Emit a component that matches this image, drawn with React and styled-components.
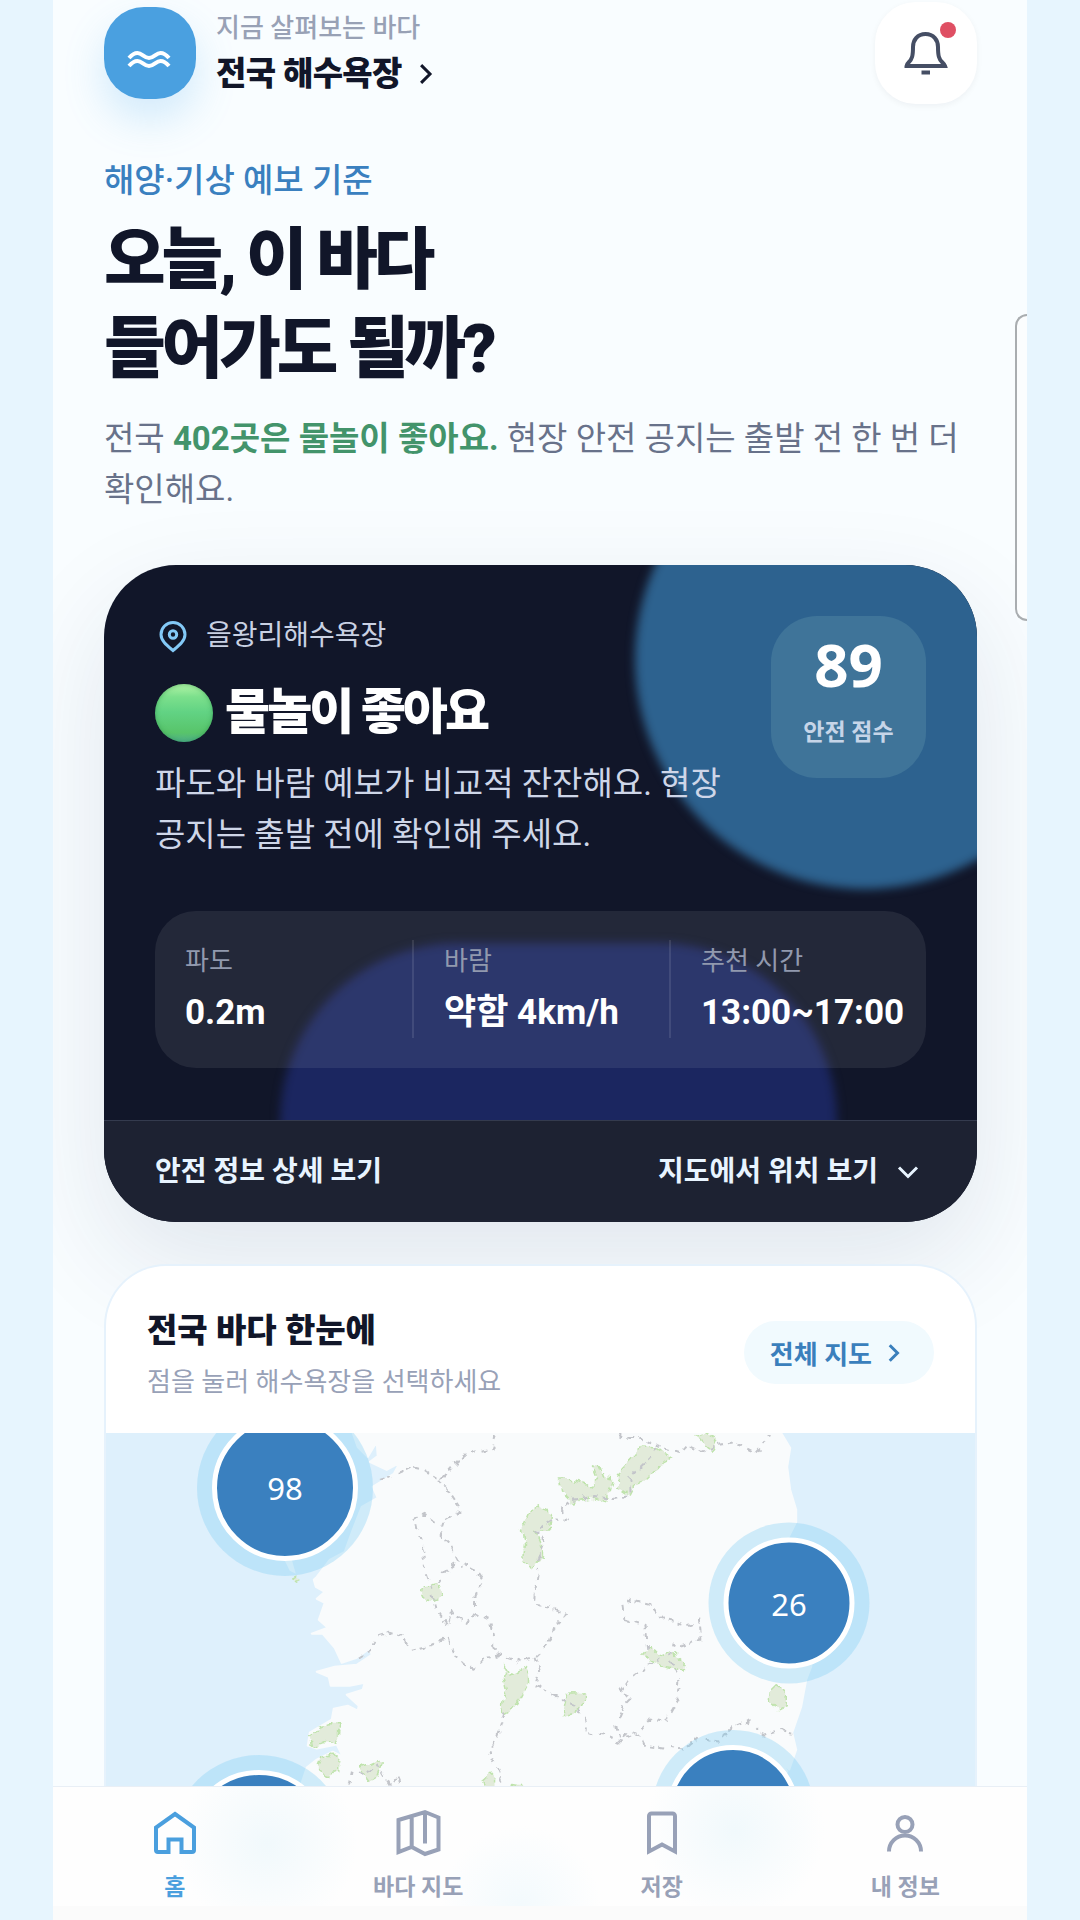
import React, { useState } from 'react';
import styled, { createGlobalStyle } from 'styled-components';

const GUTTER = '53px';

const GlobalStyle = createGlobalStyle`
    *, *::before, *::after {
        box-sizing: border-box;
    }

    body {
        margin: 0;
        background: #e7f5fe;
        color: #111629;
        font-family: Roboto, 'Noto Sans CJK KR', sans-serif;
        word-break: keep-all;
    }

    h1, h2, p, dl, dt, dd {
        margin: 0;
    }

    button {
        padding: 0;
        border: 0;
        background: none;
        color: inherit;
        font: inherit;
        cursor: pointer;
    }
`;

const Frame = styled.div`
    position: relative;
    display: flex;
    flex-direction: column;
    height: 100vh;
    margin: 0 ${GUTTER};
    padding: 2px 50px 0 51px;
    overflow: hidden;
    background: #f9fdff;
`;

const Header = styled.header`
    display: flex;
    align-items: center;
    gap: 20px;
`;

const Logo = styled.div`
    display: grid;
    place-items: center;
    width: 92px;
    height: 92px;
    border-radius: 40px;
    background: #4aa0e0;
    color: #fff;
    box-shadow: 0 20px 40px rgba(74, 170, 235, 0.22);
`;

const Place = styled.div`
    flex: 1;
    padding-top: 2px;
`;

const PlaceHint = styled.p`
    color: #98a1b5;
    font-size: 26px;
    font-weight: 500;
    line-height: 40px;
`;

const PlaceButton = styled.button`
    display: flex;
    align-items: center;
    gap: 8px;
    font-size: 33px;
    font-weight: 900;
    line-height: 52px;
    letter-spacing: -0.02em;
`;

const BellButton = styled.button`
    position: relative;
    display: grid;
    place-items: center;
    width: 102px;
    height: 102px;
    border-radius: 41px;
    background: #fff;
    color: #454e64;
    box-shadow: 0 2px 6px rgba(17, 22, 41, 0.05);
`;

const BellDot = styled.span`
    position: absolute;
    top: 20px;
    right: 21px;
    width: 16px;
    height: 16px;
    border-radius: 50%;
    background: #df4f63;
`;

const Eyebrow = styled.p`
    margin-top: 52px;
    color: #3a80bf;
    font-size: 33px;
    font-weight: 500;
    line-height: 50px;
`;

const Title = styled.h1`
    margin-top: 10px;
    font-size: 67px;
    font-weight: 900;
    line-height: 89px;
    letter-spacing: -0.06em;
`;

const Summary = styled.p`
    margin-top: 19px;
    color: #68728a;
    font-size: 33px;
    line-height: 51px;

    strong {
        color: #43946b;
        font-weight: 700;
    }
`;

const Hero = styled.section`
    flex: none;
    margin-top: 50px;
    overflow: hidden;
    border-radius: 72px;
    background: #111629;
    color: #fff;
    box-shadow: 0 40px 110px rgba(30, 41, 90, 0.11);
`;

const HeroBody = styled.div`
    position: relative;
    padding: 51px 51px 52px;
    overflow: hidden;
`;

const Glow = styled.span`
    position: absolute;
    border-radius: 999px;
    filter: blur(5px);
`;

const SkyGlow = styled(Glow)`
    top: -136px;
    right: -118px;
    width: 460px;
    height: 460px;
    background: #2d628f;
`;

const IndigoGlow = styled(Glow)`
    top: 378px;
    left: 176px;
    right: 140px;
    height: 357px;
    background: #1b2660;
`;

const HeroTop = styled.div`
    position: relative;
    display: flex;
    align-items: flex-start;
    justify-content: space-between;
    gap: 30px;
`;

const Spot = styled.p`
    display: flex;
    align-items: center;
    gap: 15px;
    color: #c9d1e3;
    font-size: 28px;
    line-height: 40px;

    svg {
        color: #83c9f7;
    }
`;

const Verdict = styled.h2`
    display: flex;
    align-items: center;
    gap: 12px;
    margin-top: 25px;
    font-size: 49px;
    font-weight: 900;
    line-height: 64px;
    letter-spacing: -0.06em;
`;

const GreenLight = styled.span`
    width: 58px;
    height: 58px;
    border-radius: 50%;
    background: linear-gradient(#b4f5a8 0%, #7ce08c 22%, #62d384 48%, #58c46a 84%, #4fae8c 100%);
    box-shadow: inset 0 0 5px rgba(40, 140, 70, 0.6);
`;

const Advice = styled.p`
    margin-top: 13px;
    color: #ced6e8;
    font-size: 33px;
    line-height: 51px;
`;

const Score = styled.div`
    flex: none;
    display: flex;
    flex-direction: column;
    align-items: center;
    width: 155px;
    height: 162px;
    padding-top: 18px;
    border-radius: 46px;
    background: #3f7499;
`;

const ScoreValue = styled.strong`
    font-family: 'Noto Sans', sans-serif;
    font-size: 60px;
    font-weight: 700;
    line-height: 60px;
`;

const ScoreLabel = styled.span`
    margin-top: 20px;
    color: #c6d5e8;
    font-size: 23px;
    font-weight: 700;
    line-height: 38px;
`;

const Stats = styled.dl`
    position: relative;
    display: grid;
    grid-template-columns: repeat(3, 1fr);
    margin-top: 51px;
    padding: 29px 0 30px;
    border-radius: 41px;
    background: rgba(255, 255, 255, 0.08);
`;

const Stat = styled.div`
    min-width: 0;
    padding-left: 30px;
    white-space: nowrap;

    & + & {
        border-left: 2px solid rgba(255, 255, 255, 0.1);
    }

    dt {
        color: #9199ae;
        font-size: 26px;
        line-height: 42px;
    }

    dd {
        margin-top: 6px;
        font-size: 35px;
        font-weight: 700;
        line-height: 50px;
    }
`;

const HeroFooter = styled.div`
    display: flex;
    align-items: center;
    justify-content: space-between;
    height: 102px;
    padding: 0 51px;
    border-top: 1px solid #343b4e;
    background: #1d2232;
`;

const HeroAction = styled.button`
    display: flex;
    align-items: center;
    gap: 12px;
    color: #e8f4ff;
    font-size: 28px;
    font-weight: 700;
    line-height: 40px;
`;

const MapCard = styled.section`
    flex: 1;
    display: flex;
    flex-direction: column;
    min-height: 0;
    margin-top: 42px;
    overflow: hidden;
    border: 2px solid #e6f2fc;
    border-bottom: 0;
    border-radius: 62px 62px 0 0;
    background: #fff;
`;

const MapHeader = styled.div`
    flex: none;
    display: flex;
    align-items: center;
    justify-content: space-between;
    height: 167px;
    padding: 14px 41px 0;
`;

const MapTitle = styled.h2`
    font-size: 33px;
    font-weight: 900;
    line-height: 50px;
`;

const MapHint = styled.p`
    color: #98a1b7;
    font-size: 26px;
    line-height: 52px;
`;

const MapLink = styled.a`
    display: flex;
    align-items: center;
    gap: 8px;
    height: 63px;
    margin-bottom: 8px;
    padding: 0 26px;
    border-radius: 32px;
    background: #f1fafe;
    color: #3a7fbc;
    font-size: 26px;
    font-weight: 700;
    text-decoration: none;
`;

const MapCanvas = styled.div`
    position: relative;
    flex: 1;
    overflow: hidden;
    background: #def0fc;

    > svg {
        display: block;
        width: 100%;
    }
`;

const Cluster = styled.button`
    position: absolute;
    top: ${({ $y }) => $y}px;
    left: ${({ $x }) => $x}%;
    width: ${({ $size }) => $size}px;
    height: ${({ $size }) => $size}px;
    border: 5px solid #fff;
    border-radius: 50%;
    background: #3a80bf;
    color: #fff;
    box-shadow: 0 0 0 15px rgba(125, 205, 244, 0.34);
    font-family: 'Noto Sans', sans-serif;
    font-size: 31px;
    transform: translate(-50%, -50%);
`;

const SideHandle = styled.button`
    position: absolute;
    top: 314px;
    right: 0;
    width: 12px;
    height: 307px;
    border: 2px solid #a9adb0;
    border-right: 0;
    border-radius: 12px 0 0 12px;
    background: #fbfdfe;
`;

const Nav = styled.nav`
    position: fixed;
    right: ${GUTTER};
    bottom: 0;
    left: ${GUTTER};
    display: grid;
    grid-template-columns: repeat(4, 1fr);
    height: 134px;
    padding-top: 21px;
    border-top: 1px solid #e9eff6;
    border-bottom: 14px solid #fbfbfb;
    background:
        radial-gradient(circle at 22% 48%, #f1f9fc, transparent 90px),
        radial-gradient(circle at 70% 36%, #f1f9fc, transparent 90px),
        radial-gradient(circle at 48% 100%, #f3fafd, transparent 80px),
        #fefefe;
`;

const NavItem = styled.button`
    display: flex;
    flex-direction: column;
    align-items: center;
    gap: 12px;
    color: ${({ $active }) => ($active ? '#4a9fde' : '#98a1b7')};
    font-size: 23px;
    font-weight: 700;
    line-height: 36px;
`;

const Chevron = ({ size, down }) => (
    <svg width={size} height={size} viewBox="0 0 36 36" fill="none" stroke="currentColor" strokeWidth={108 / size}>
        <path d={down ? 'M9 13.5l9 9 9-9' : 'M12.5 8l10 10-10 10'} />
    </svg>
);

const Icon = ({ children }) => (
    <svg width="50" height="50" viewBox="0 0 50 50" fill="none" stroke="currentColor" strokeWidth="4">
        {children}
    </svg>
);

const icons = {
    home: <path d="M25 6L44 19.5V42a2 2 0 0 1-2 2H31.5V31.5h-13V44H8a2 2 0 0 1-2-2V19.5Z" />,
    map: <path d="M5.5 12L32 4L45.500 9.500V41.500L32 46L18.700 39L5.500 44ZM18.700 8.500V39M32 4V35.500" />,
    bookmark: <path d="M12 8a2.500 2.500 0 0 1 2.500-2.500h21A2.500 2.500 0 0 1 38 8v35.500L25 36.500L12 43.500Z" />,
    person: (
        <>
            <circle cx="25" cy="16.500" r="7.500" />
            <path d="M9 43.500a16 16 0 0 1 32 0" />
        </>
    )
};

const tabs = [
    { id: 'home', label: '홈' },
    { id: 'map', label: '바다 지도' },
    { id: 'bookmark', label: '저장' },
    { id: 'person', label: '내 정보' }
];

const stats = [
    { label: '파도', value: '0.2m' },
    { label: '바람', value: '약함 4km/h' },
    { label: '추천 시간', value: '13:00~17:00' }
];

// x is a share of the map width, y and size are pixels
const clusters = [
    { id: 'incheon', count: 98, x: 20.6, y: 55, size: 146 },
    { id: 'pohang', count: 26, x: 78.6, y: 170, size: 131 },
    { id: 'busan', count: 41, x: 72.1, y: 378, size: 132 },
    { id: 'mokpo', count: 87, x: 17.6, y: 410, size: 146 }
];

const parks = [
    '642,1447 657,1448 673,1458 663,1463 645,1482 635,1485 630,1495 617,1487 620,1473 632,1460',
    '560,1478 568,1478 592,1487 598,1478 593,1465 600,1467 603,1477 613,1478 607,1503 592,1498 572,1502 562,1492',
    '530,1512 540,1507 552,1513 550,1530 535,1530 540,1540 543,1555 532,1571 523,1560 525,1545 522,1530',
    '698,1437 707,1433 718,1440 713,1451 707,1447',
    '423,1585 437,1583 442,1595 427,1603 422,1593',
    '505,1667 510,1675 527,1667 527,1687 517,1707 503,1715 502,1703 508,1692 504,1677',
    '340,1723 338,1742 323,1743 312,1748 310,1738 318,1728 330,1723',
    '333,1753 340,1763 340,1772 328,1776 318,1768 322,1758',
    '362,1767 377,1760 383,1763 378,1777 370,1782 363,1773',
    '483,1780 490,1774 495,1780 495,1790 485,1790',
    '513,1783 523,1785 525,1790 511,1790',
    '643,1655 650,1647 660,1657 671,1651 686,1663 685,1672 667,1668',
    '563,1715 568,1695 585,1693 585,1703 574,1713',
    '776,1685 787,1693 787,1707 779,1711 770,1702 771,1690',
    '291,1579 295,1577 298,1580 294,1582'
];

const borders = [
    '378,1480 395,1475 413,1467 425,1470 440,1480 455,1465 465,1455 480,1450 492,1447 497,1433',
    '440,1480 452,1495 462,1510 445,1520 440,1535 450,1545 458,1560 475,1570 483,1582 476,1595 475,1612 467,1624 455,1617 452,1612 448,1626 436,1610 433,1595 430,1580 425,1565 425,1550 418,1532 415,1520 425,1515 435,1522',
    '438,1582 445,1572 455,1565 462,1566',
    '360,1658 372,1650 377,1637 390,1633 402,1637 410,1650 425,1647 432,1645 448,1638 453,1655 465,1665 475,1668 485,1658 498,1657 495,1640 490,1620 475,1613',
    '498,1655 520,1662 535,1657 548,1645 555,1625 566,1614 552,1608 535,1605 537,1590 540,1570',
    '535,1657 540,1672 535,1685 550,1693 563,1700 575,1705 586,1720 585,1733 610,1737 620,1742 640,1735 645,1745 665,1748 685,1750 700,1738 720,1742 733,1728 750,1721 765,1735 780,1730 793,1734',
    '505,1713 498,1735 490,1755 498,1770 503,1782',
    '538,1560 545,1540 535,1530 553,1518 568,1520 562,1508 572,1500 595,1497 612,1500 630,1495 630,1478 650,1458 658,1445',
    '620,1433 625,1438 640,1438 655,1445 680,1453 688,1445 703,1452 718,1445 737,1442 755,1452 770,1435',
    '625,1620 623,1605 630,1600 650,1605 665,1620 690,1625 700,1620 702,1640 680,1648 673,1645 670,1660 680,1680 678,1700 665,1722 650,1720 642,1730 620,1740 617,1725 625,1705 632,1698 620,1692 630,1678 645,1668 660,1660',
    '625,1620 645,1625 648,1650',
    '350,1785 353,1772 363,1775 378,1765 390,1785 398,1775 402,1785'
];

const land =
    'M353 1433L358 1447L368 1457L377 1442L378 1456L370 1462L387 1470L400 1463L394 1474L373 1487L378 1498' +
    'L362 1507L353 1530L345 1552L330 1560L317 1577L314 1580L316 1587L325 1592L317 1599L325 1603L319 1620' +
    'L328 1628L312 1634L323 1634L335 1648L342 1663L357 1658L370 1649L372 1655L357 1665L335 1667L317 1672' +
    'L329 1677L331 1686L350 1686L365 1683L363 1690L347 1695L359 1706L358 1711L348 1706L334 1709L332 1720' +
    'L310 1733L308 1746L317 1749L337 1745L343 1757L333 1752L317 1760L307 1768L302 1783L310 1920H760' +
    'L770 1790L788 1772L781 1760L790 1770L797 1750L793 1733L802 1707L807 1680L812 1667L816 1620L800 1570' +
    'L789 1538L797 1522L797 1510L791 1490L788 1467L791 1448L782 1433Z';

const SeaMap = () => (
    <svg viewBox="106 1433 870 487" aria-hidden="true">
        <defs>
            <filter id="rough" x="-5%" y="-5%" width="110%" height="110%">
                <feTurbulence type="fractalNoise" baseFrequency="0.09" numOctaves="2" seed="4" />
                <feDisplacementMap in="SourceGraphic" scale="9" xChannelSelector="R" yChannelSelector="G" />
            </filter>
        </defs>
        <path d={land} fill="#f9fbfc" stroke="#f9fbfc" strokeWidth="2" strokeLinejoin="round" />
        <path d="M285 1561l7-1 4 14-6-3z" fill="#f9fbfc" />
        <g filter="url(#rough)">
            {parks.map((points, index) => (
                <polygon key={index} points={points} fill="#e2ebda" stroke="#bfe3ac" strokeWidth="1.500" strokeDasharray="5 3" />
            ))}
            {borders.map((points, index) => (
                <polyline key={index} points={points} fill="none" stroke="#c3c5ca" strokeWidth="2" strokeDasharray="5 5" />
            ))}
        </g>
    </svg>
);

export default function App() {

    const [activeTab, setActiveTab] = useState('home');

    return (
        <>
            <GlobalStyle />
            <Frame>
                <Header>
                    <Logo>
                        <Icon>
                            <path d="M4 30C7 26.500 9.500 25 12.500 25C17 25 19 30 24 30C29 30 31 25 35.500 25C38.500 25 41 26.500 44 30" />
                            <path d="M4 38C7 34.500 9.500 33 12.500 33C17 33 19 38 24 38C29 38 31 33 35.500 33C38.500 33 41 34.500 44 38" />
                        </Icon>
                    </Logo>
                    <Place>
                        <PlaceHint>지금 살펴보는 바다</PlaceHint>
                        <PlaceButton type="button">
                            전국 해수욕장
                            <Chevron size={32} />
                        </PlaceButton>
                    </Place>
                    <BellButton type="button" aria-label="알림">
                        <Icon>
                            <path d="M24.500 6C16.500 6 12 12 12 19C12 28 11 31 8 34Q5.500 36.500 5.500 38H44Q43.500 36.500 41 34C38 31 37 28 37 19C37 12 32.500 6 24.500 6Z" />
                            <path d="M20.500 44.500h8.500" />
                        </Icon>
                        <BellDot />
                    </BellButton>
                </Header>

                <Eyebrow>해양·기상 예보 기준</Eyebrow>
                <Title>오늘, 이 바다<br />들어가도 될까?</Title>
                <Summary>
                    전국 <strong>402곳은 물놀이 좋아요.</strong> 현장 안전 공지는 출발 전 한 번 더 확인해요.
                </Summary>

                <Hero>
                    <HeroBody>
                        <SkyGlow />
                        <IndigoGlow />
                        <HeroTop>
                            <div>
                                <Spot>
                                    <svg width="36" height="36" viewBox="0 0 36 36" fill="none" stroke="currentColor" strokeWidth="3">
                                        <path d="M18 32.500C12 27.500 6 23 6 16.500a12 12 0 0 1 24 0C30 23 24 27.500 18 32.500Z" />
                                        <circle cx="18" cy="16.500" r="3.700" />
                                    </svg>
                                    을왕리해수욕장
                                </Spot>
                                <Verdict><GreenLight />물놀이 좋아요</Verdict>
                                <Advice>파도와 바람 예보가 비교적 잔잔해요. 현장 공지는 출발 전에 확인해 주세요.</Advice>
                            </div>
                            <Score>
                                <ScoreValue>89</ScoreValue>
                                <ScoreLabel>안전 점수</ScoreLabel>
                            </Score>
                        </HeroTop>
                        <Stats>
                            {stats.map(stat => (
                                <Stat key={stat.label}>
                                    <dt>{stat.label}</dt>
                                    <dd>{stat.value}</dd>
                                </Stat>
                            ))}
                        </Stats>
                    </HeroBody>
                    <HeroFooter>
                        <HeroAction type="button">안전 정보 상세 보기</HeroAction>
                        <HeroAction type="button">
                            지도에서 위치 보기
                            <Chevron size={36} down />
                        </HeroAction>
                    </HeroFooter>
                </Hero>

                <MapCard>
                    <MapHeader>
                        <div>
                            <MapTitle>전국 바다 한눈에</MapTitle>
                            <MapHint>점을 눌러 해수욕장을 선택하세요</MapHint>
                        </div>
                        <MapLink href="#map">
                            전체 지도
                            <Chevron size={28} />
                        </MapLink>
                    </MapHeader>
                    <MapCanvas>
                        <SeaMap />
                        {clusters.map(cluster => (
                            <Cluster key={cluster.id} type="button" $x={cluster.x} $y={cluster.y} $size={cluster.size}>
                                {cluster.count}
                            </Cluster>
                        ))}
                    </MapCanvas>
                </MapCard>

                <SideHandle type="button" aria-label="패널 열기" />
            </Frame>

            <Nav>
                {tabs.map(tab => (
                    <NavItem
                        key={tab.id}
                        type="button"
                        $active={tab.id === activeTab}
                        onClick={() => setActiveTab(tab.id)}
                    >
                        <Icon>{icons[tab.id]}</Icon>
                        {tab.label}
                    </NavItem>
                ))}
            </Nav>
        </>
    );
}
